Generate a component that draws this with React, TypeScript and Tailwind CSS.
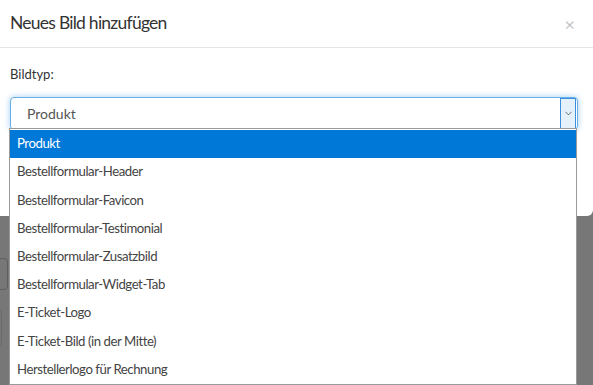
import { ChevronDown } from "lucide-react";

const options = [
    "Produkt",
    "Bestellformular-Header",
    "Bestellformular-Favicon",
    "Bestellformular-Testimonial",
    "Bestellformular-Zusatzbild",
    "Bestellformular-Widget-Tab",
    "E-Ticket-Logo",
    "E-Ticket-Bild (in der Mitte)",
    "Herstellerlogo für Rechnung",
];

const font = { fontFamily: 'Lato, "Noto Sans", sans-serif' };

export default function App() {
    return (
        <div className="relative w-[593px] h-[385px] overflow-hidden bg-[#777777]" style={font}>
            {/* page behind the backdrop */}
            <div className="absolute left-[-10px] top-[258px] w-[18px] h-[32px] rounded border border-[#5f5f5f]"></div>
            <div className="absolute left-[-10px] top-[310px] w-[12px] h-[36px] rounded border border-[#6a6a6a]"></div>

            {/* Modal */}
            <div className="relative w-[593px] h-[216px] bg-white rounded-br-[6px]">
                <div className="flex items-center justify-between h-[48px] pl-[10px] pr-[18px] border-b border-[#e5e5e5]">
                    <h4 className="text-[17.5px] tracking-[-0.75px] text-[#333]">Neues Bild hinzufügen</h4>
                    <span className="text-[18px] text-[#c4c4c4] leading-none">×</span>
                </div>
                <div className="px-[10px] pt-[17px]">
                    <label className="block text-[13px] text-[#333] mb-[12px]">Bildtyp:</label>
                    <div className="flex items-center h-[33px] w-[568px] border border-[#66afe9] rounded-[4px] shadow-[0_0_6px_rgba(102,175,233,0.6)] bg-white">
                        <span className="flex-1 pl-[16px] text-[14px] text-[#555]">Produkt</span>
                        <span className="flex items-center justify-center w-[16px] h-[31px] mr-[1px] bg-[#e5f1fb] border border-[#3c8fdc]">
                            <ChevronDown size={11} strokeWidth={1.5} className="text-[#333]" />
                        </span>
                    </div>
                </div>
            </div>

            {/* Dropdown list */}
            <div className="absolute left-[9px] top-[128px] w-[568px] border border-[#9a9a9a] bg-white pt-[1px]">
                {options.map((o, i) => (
                    <div
                        key={o}
                        className={`flex items-center h-[28.2px] pl-[7px] text-[13.2px] tracking-[-0.45px] ${
                            i === 0 ? "bg-[#0078d7] text-white" : "text-[#444]"
                        }`}
                    >
                        {o}
                    </div>
                ))}
            </div>
        </div>
    );
}
